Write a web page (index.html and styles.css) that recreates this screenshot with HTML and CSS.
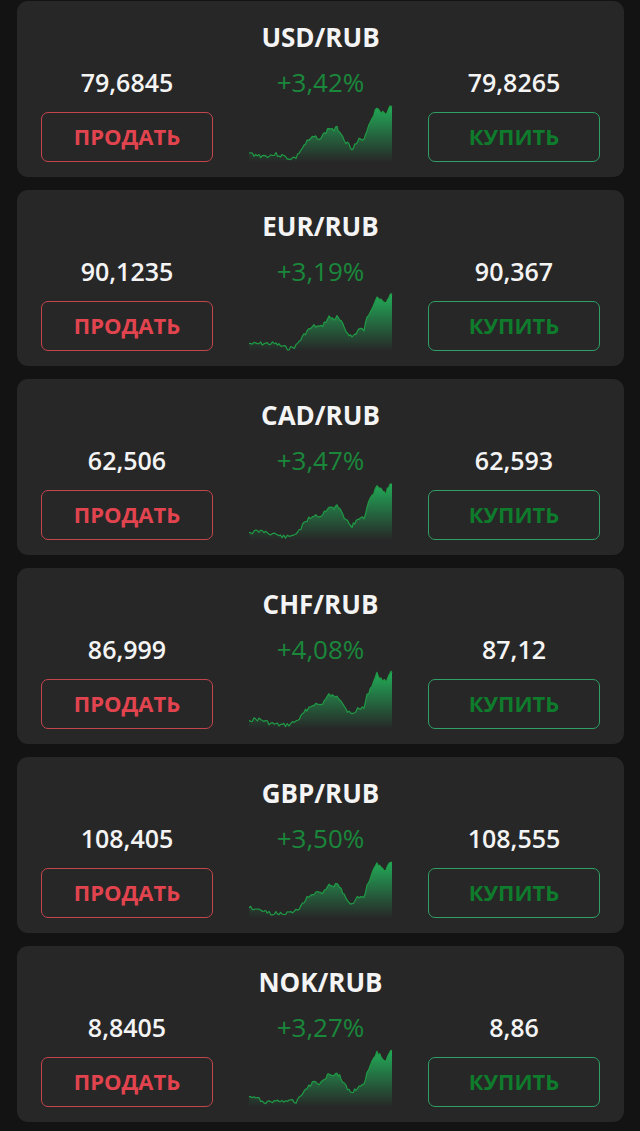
FILE: index.html
```html
<!DOCTYPE html>
<html lang="ru">
<head>
    <meta charset="UTF-8">
    <meta name="viewport" content="width=device-width, initial-scale=1.0">
    <title>Курсы валют</title>
    <link rel="stylesheet" href="styles.css">
</head>
<body>
    <div class="list">
        <div class="card">
            <div class="pair">USD/RUB</div>
            <div class="quote">
                <div class="side">
                    <div class="price">79,6845</div>
                    <a class="btn sell" href="#">ПРОДАТЬ</a>
                </div>
                <div class="mid">
                    <div class="change">+3,42%</div>
                    <svg class="chart" data-seed="3" viewBox="0 0 144 59"></svg>
                </div>
                <div class="side">
                    <div class="price">79,8265</div>
                    <a class="btn buy" href="#">КУПИТЬ</a>
                </div>
            </div>
        </div>
        <div class="card">
            <div class="pair">EUR/RUB</div>
            <div class="quote">
                <div class="side">
                    <div class="price">90,1235</div>
                    <a class="btn sell" href="#">ПРОДАТЬ</a>
                </div>
                <div class="mid">
                    <div class="change">+3,19%</div>
                    <svg class="chart" data-seed="7" viewBox="0 0 144 59"></svg>
                </div>
                <div class="side">
                    <div class="price">90,367</div>
                    <a class="btn buy" href="#">КУПИТЬ</a>
                </div>
            </div>
        </div>
        <div class="card">
            <div class="pair">CAD/RUB</div>
            <div class="quote">
                <div class="side">
                    <div class="price">62,506</div>
                    <a class="btn sell" href="#">ПРОДАТЬ</a>
                </div>
                <div class="mid">
                    <div class="change">+3,47%</div>
                    <svg class="chart" data-seed="11" viewBox="0 0 144 59"></svg>
                </div>
                <div class="side">
                    <div class="price">62,593</div>
                    <a class="btn buy" href="#">КУПИТЬ</a>
                </div>
            </div>
        </div>
        <div class="card">
            <div class="pair">CHF/RUB</div>
            <div class="quote">
                <div class="side">
                    <div class="price">86,999</div>
                    <a class="btn sell" href="#">ПРОДАТЬ</a>
                </div>
                <div class="mid">
                    <div class="change">+4,08%</div>
                    <svg class="chart" data-seed="17" viewBox="0 0 144 59"></svg>
                </div>
                <div class="side">
                    <div class="price">87,12</div>
                    <a class="btn buy" href="#">КУПИТЬ</a>
                </div>
            </div>
        </div>
        <div class="card">
            <div class="pair">GBP/RUB</div>
            <div class="quote">
                <div class="side">
                    <div class="price">108,405</div>
                    <a class="btn sell" href="#">ПРОДАТЬ</a>
                </div>
                <div class="mid">
                    <div class="change">+3,50%</div>
                    <svg class="chart" data-seed="23" viewBox="0 0 144 59"></svg>
                </div>
                <div class="side">
                    <div class="price">108,555</div>
                    <a class="btn buy" href="#">КУПИТЬ</a>
                </div>
            </div>
        </div>
        <div class="card">
            <div class="pair">NOK/RUB</div>
            <div class="quote">
                <div class="side">
                    <div class="price">8,8405</div>
                    <a class="btn sell" href="#">ПРОДАТЬ</a>
                </div>
                <div class="mid">
                    <div class="change">+3,27%</div>
                    <svg class="chart" data-seed="31" viewBox="0 0 144 59"></svg>
                </div>
                <div class="side">
                    <div class="price">8,86</div>
                    <a class="btn buy" href="#">КУПИТЬ</a>
                </div>
            </div>
        </div>
    </div>

<script>
    // rough shape of the last-month rate, same for every pair
    var base = [
        [0, 50], [10, 51], [20, 53], [27, 53], [33, 54], [40, 55], [47, 53],
        [52, 47], [58, 39], [65, 34], [72, 35], [77, 29], [80, 25], [85, 27],
        [88, 25], [92, 30], [97, 39], [103, 45], [107, 41], [110, 37], [115, 38],
        [118, 26], [123, 15], [128, 4], [132, 9], [137, 12], [141, 2], [143, 3]
    ];

    function makeRandom(seed) {
        return function() {
            seed = (seed * 9301 + 49297) % 233280;
            return seed / 233280;
        };
    }

    function drawChart(svg, index) {
        var rnd = makeRandom(parseInt(svg.dataset.seed, 10));
        var pts = [];
        for (var i = 0; i < base.length - 1; i++) {
            var a = base[i], b = base[i + 1];
            var steps = Math.max(2, Math.round((b[0] - a[0]) / 1.6));
            for (var s = 0; s < steps; s++) {
                var t = s / steps;
                var x = a[0] + (b[0] - a[0]) * t;
                var y = a[1] + (b[1] - a[1]) * t;
                if (i > 0 || s > 0) y += (rnd() - 0.5) * 4;
                if (x < 50) y += Math.sin(x / 6 + index) * 1.5;
                pts.push([x, Math.max(0.5, Math.min(58, y))]);
            }
        }
        pts.push(base[base.length - 1]);

        var line = pts.map(function(p, k) {
            return (k ? "L" : "M") + p[0].toFixed(1) + " " + p[1].toFixed(1);
        }).join(" ");
        var gid = "fade" + index;

        svg.innerHTML =
            '<defs><linearGradient id="' + gid + '" x1="0" y1="0" x2="0" y2="59" gradientUnits="userSpaceOnUse">' +
            '<stop offset="0" stop-color="#22b85e" stop-opacity="0.95"/>' +
            '<stop offset="1" stop-color="#22b85e" stop-opacity="0"/>' +
            '</linearGradient></defs>' +
            '<path d="' + line + ' L143 59 L0 59 Z" fill="url(#' + gid + ')"/>' +
            '<path d="' + line + '" fill="none" stroke="#1f9a45" stroke-width="1.2" stroke-linejoin="round"/>';
    }

    document.querySelectorAll(".chart").forEach(drawChart);
</script>
</body>
</html>
```

FILE: styles.css
```css
body {
    margin: 0;
    background: #131313;
    font-family: "Open Sans", "Noto Sans", sans-serif;
    color: #f4f4f4;
}
.list {
    display: flex;
    flex-direction: column;
    gap: 13px;
    padding: 1px 16px 9px 17px;
}
.card {
    background: #272727;
    border-radius: 11px;
    height: 176px;
    box-sizing: border-box;
    padding: 20px 24px 15px;
}
.pair {
    text-align: center;
    font-size: 26px;
    font-weight: 700;
    line-height: 32px;
}
.quote {
    display: grid;
    grid-template-columns: 172px 1fr 172px;
    margin-top: 13px;
}
.side {
    display: flex;
    flex-direction: column;
    gap: 14px;
}
.price {
    text-align: center;
    font-size: 25px;
    font-weight: 600;
    line-height: 32px;
}
.btn {
    display: flex;
    align-items: center;
    justify-content: center;
    height: 50px;
    box-sizing: border-box;
    padding-bottom: 3px;
    border-radius: 7px;
    border: 1.5px solid;
    text-decoration: none;
    font-size: 22px;
    font-weight: 700;
}
.sell {
    border-color: #c4464d;
    color: #e2444f;
}
.buy {
    border-color: #2f9f66;
    color: #0f7b2c;
}
.mid {
    display: flex;
    flex-direction: column;
    align-items: center;
    justify-content: space-between;
}
.change {
    font-size: 26px;
    font-weight: 500;
    line-height: 32px;
    color: #1a873b;
}
.chart {
    width: 144px;
    height: 59px;
    display: block;
}
```
